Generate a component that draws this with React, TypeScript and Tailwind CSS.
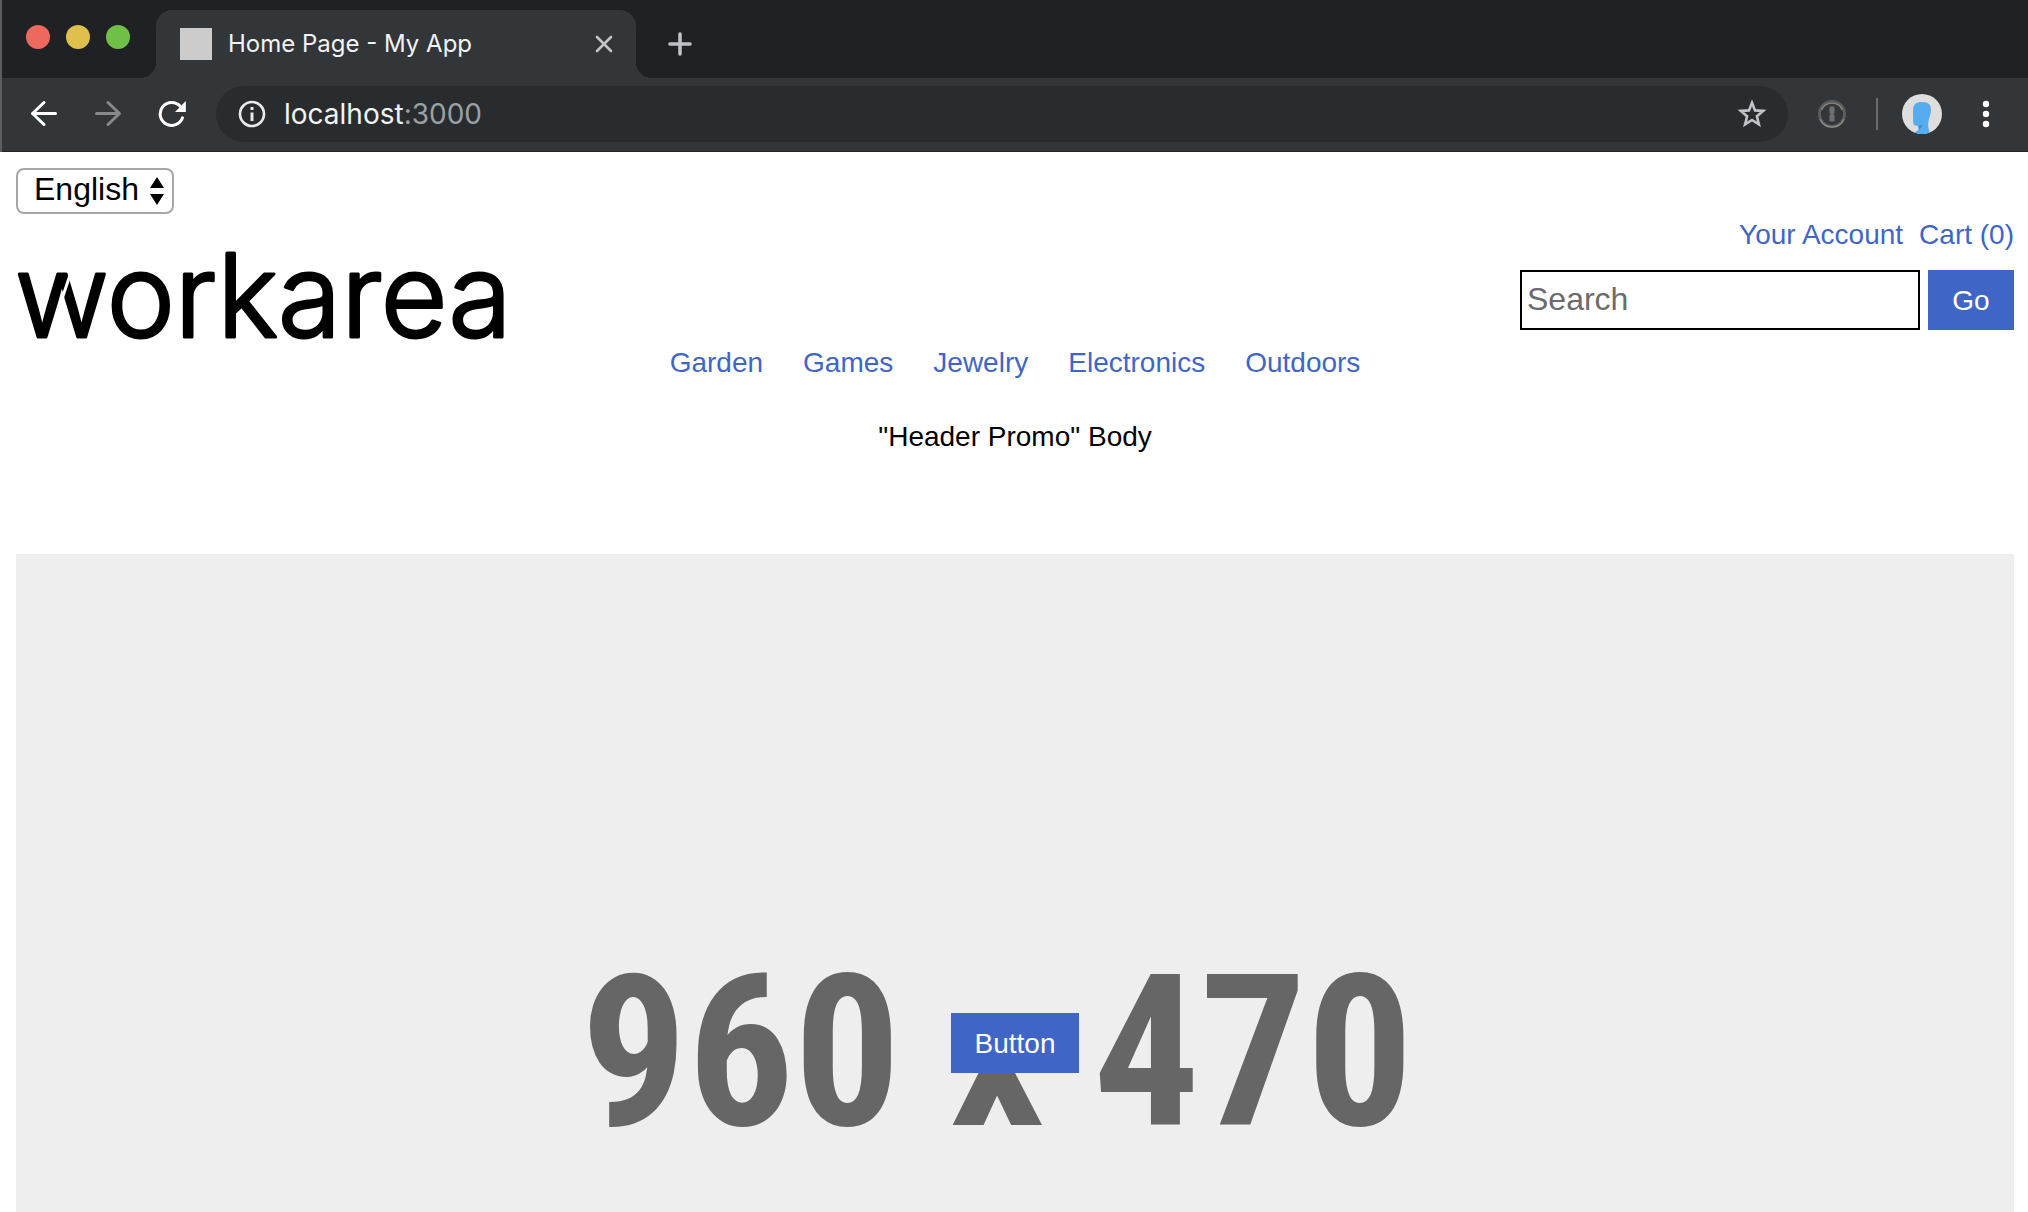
import React from 'react';

const categories = ['Garden', 'Games', 'Jewelry', 'Electronics', 'Outdoors'];

function TabStrip() {
  return (
    <div className="flex h-[78px] items-end bg-[#202124]">
      <div className="flex items-center gap-4 self-start pt-[25px] pl-6">
        <span className="size-6 rounded-full bg-[#ee695d]" />
        <span className="size-6 rounded-full bg-[#dfc04c]" />
        <span className="size-6 rounded-full bg-[#70c048]" />
      </div>
      <div className="ml-[10px] size-4 bg-[radial-gradient(circle_at_0_0,#202124_16px,#323639_16px)]" />
      <div className="flex h-[68px] w-[480px] items-center rounded-t-2xl bg-[#323639] pr-[22px] pl-6">
        <span className="size-8 bg-[#cccccc]" />
        <span className="ml-4 flex-1 font-[Inter] text-[24px] leading-8 text-[#f1f3f4]">Home Page - My App</span>
        <button type="button" aria-label="Close tab" className="grid size-5 place-items-center text-[#c3c5c7]">
          <svg viewBox="0 0 20 20" className="size-5" fill="none" stroke="currentColor" strokeWidth="2.6" strokeLinecap="round">
            <path d="M3 3l14 14M17 3L3 17" />
          </svg>
        </button>
      </div>
      <div className="size-4 bg-[radial-gradient(circle_at_16px_0,#202124_16px,#323639_16px)]" />
      <button type="button" aria-label="New tab" className="mb-[22px] ml-4 text-[#bdc1c6]">
        <svg viewBox="0 0 24 24" className="size-6" fill="none" stroke="currentColor" strokeWidth="3.6" strokeLinecap="round">
          <path d="M12 2v20M2 12h20" />
        </svg>
      </button>
    </div>
  );
}

function Toolbar() {
  return (
    <div className="flex h-[74px] items-center border-b border-[#242527] bg-[#323639] pr-[37px] pb-px pl-7">
      <button type="button" aria-label="Back" className="text-white">
        <svg viewBox="0 0 28 28" className="size-7" fill="none" stroke="currentColor" strokeWidth="3" strokeLinecap="round" strokeLinejoin="round">
          <path d="M25.500 13.500H2.500M14 2.500L2.500 13.500L14 24.500" />
        </svg>
      </button>
      <button type="button" aria-label="Forward" className="ml-9 text-[#87898b]">
        <svg viewBox="0 0 28 28" className="size-7" fill="none" stroke="currentColor" strokeWidth="3" strokeLinecap="round" strokeLinejoin="round">
          <path d="M2.500 13.500H25.500M14 2.500L25.500 13.500L14 24.500" />
        </svg>
      </button>
      <button type="button" aria-label="Reload" className="ml-9 text-white">
        <svg viewBox="0 0 28 28" className="size-7" fill="none" stroke="currentColor" strokeWidth="3" strokeLinecap="round">
          <path d="M24.500 17.800A11.500 11.500 0 1 1 22.500 6.500" />
          <path d="M27.800 1v11H17z" fill="currentColor" stroke="none" />
        </svg>
      </button>
      <div className="ml-[30px] flex h-14 flex-1 items-center rounded-full bg-[#282c2f] pr-[21px] pl-[22px]">
        <svg viewBox="0 0 28 28" className="size-7" fill="none" stroke="#e8eaed" strokeWidth="2.6">
          <circle cx="14" cy="14" r="12" />
          <path d="M14 12.500V21M14 7v3" strokeWidth="3" />
        </svg>
        <div className="ml-[18px] flex-1 font-[Inter] text-[28px] leading-9 text-[#f1f3f4]">
          localhost<span className="text-[#9aa0a6]">:3000</span>
        </div>
        <button type="button" aria-label="Bookmark this page" className="text-[#c0c4c9]">
          <svg viewBox="0 0 30 30" className="size-[30px]" fill="none" stroke="currentColor" strokeWidth="2.600">
            <path d="M15 3.800L18 11.400L26.200 11.900L19.900 17.200L21.900 25.400L15 21L8.100 25.400L10.100 17.200L3.800 11.900L12 11.400Z" />
          </svg>
        </button>
      </div>
      <button type="button" aria-label="Password manager" className="ml-[29px]">
        <svg viewBox="0 0 30 30" className="size-[30px]" fill="none">
          <circle cx="15" cy="15" r="12.500" stroke="#5c5c5b" strokeWidth="3" />
          <path d="M3 20A13 13 0 0 0 27 20" stroke="#858585" strokeWidth="1.500" />
          <path d="M4.500 11A11.400 11.400 0 0 1 25.500 11" stroke="#858585" strokeWidth="1.200" />
          <path d="M12.500 7.500h5v6.500l-1 1l1 1v6.500h-5v-6.500l1-1l-1-1z" fill="#6e6e6e" />
        </svg>
      </button>
      <span className="ml-[29px] h-8 w-0.5 bg-[#6a6d70]" />
      <button type="button" aria-label="Profile" className="ml-6">
        <svg viewBox="0 0 40 40" className="size-10">
          <circle cx="20" cy="20" r="20" fill="#dedede" />
          <path d="M11 17C11 10 14 8 20 8C27 8 29 11 29 16C29 21 26.500 24 26.200 30C26 34 27 36.500 28 38.300A20 20 0 0 1 12 38.300C15 37.500 17 36.500 16.500 32C13 32 11.500 31 11.200 28Z" fill="#55acee" />
          <path d="M16.500 32Q19.500 31.800 21 30.300Q20 33.500 17 35Z" fill="#3b88c3" />
        </svg>
      </button>
      <button type="button" aria-label="Browser menu" className="ml-[39px]">
        <svg viewBox="0 0 10 28" className="h-7 w-2.5" fill="white">
          <circle cx="5" cy="4" r="3.200" />
          <circle cx="5" cy="14" r="3.200" />
          <circle cx="5" cy="24" r="3.200" />
        </svg>
      </button>
    </div>
  );
}

function Logo() {
  return (
    <a href="#home" aria-label="workarea" className="block">
      <svg viewBox="0 0 600 160" className="h-40 w-[600px]">
        <text x="-1" y="123" fontFamily="Inter" fontSize="115" fontWeight="300" fill="black" stroke="black" strokeWidth="3" strokeLinejoin="round">
          workarea
        </text>
        <path d="M43 94L55 58" stroke="white" strokeWidth="3" />
      </svg>
    </a>
  );
}

export default function App() {
  return (
    <div className="flex h-screen flex-col overflow-hidden bg-white font-['Liberation_Sans',sans-serif] text-[28px] leading-[42px] text-black">
      <header className="shrink-0 border-l-2 border-[#5b5e61]">
        <TabStrip />
        <Toolbar />
      </header>
      <main className="shrink-0 px-4 pt-4 pr-[14px]">
        <div className="relative w-[158px]">
          <select aria-label="Language" className="block h-[46px] w-full appearance-none rounded-lg border-2 border-[#a6a6a6] bg-white pb-1 pl-4 text-[32px] leading-9">
            <option>English</option>
          </select>
          <svg viewBox="0 0 14 28" className="pointer-events-none absolute top-[9px] right-2.5 h-7 w-3.5">
            <path d="M7 0l7 11H0zM0 17h14L7 28z" />
          </svg>
        </div>
        <div className="flex items-start justify-between">
          <Logo />
          <div className="flex flex-col items-end">
            <div className="flex gap-4 text-[#3f66c6]">
              <a href="#account">Your Account</a>
              <a href="#cart">Cart (0)</a>
            </div>
            <form className="mt-[14px] flex gap-2">
              <input type="search" aria-label="Search" placeholder="Search" className="h-[60px] w-[400px] border-2 border-black px-[5px] pb-0.5 text-[32px] placeholder:text-[#6b6b6b]" />
              <button type="button" className="h-[60px] w-[86px] bg-[#3f66c6] pt-0.5 text-white">Go</button>
            </form>
          </div>
        </div>
        <nav className="mt-[-32px] flex justify-center gap-10 text-[#3f66c6]">
          {categories.map((name) => (
            <a key={name} href={'#' + name.toLowerCase()}>{name}</a>
          ))}
        </nav>
        <p className="mt-8 text-center">"Header Promo" Body</p>
        <section className="relative mt-24 grid aspect-[960/470] place-items-center bg-[#eeeeee]">
          <span className="pt-5 pr-9 font-['Roboto_Condensed'] text-[211px] leading-none font-bold text-[#666666]">960 x 470</span>
          <button type="button" className="absolute top-1/2 left-1/2 h-[60px] w-32 -translate-x-1/2 -translate-y-1/2 bg-[#3f66c6] pt-0.5 text-white">Button</button>
        </section>
      </main>
    </div>
  );
}
